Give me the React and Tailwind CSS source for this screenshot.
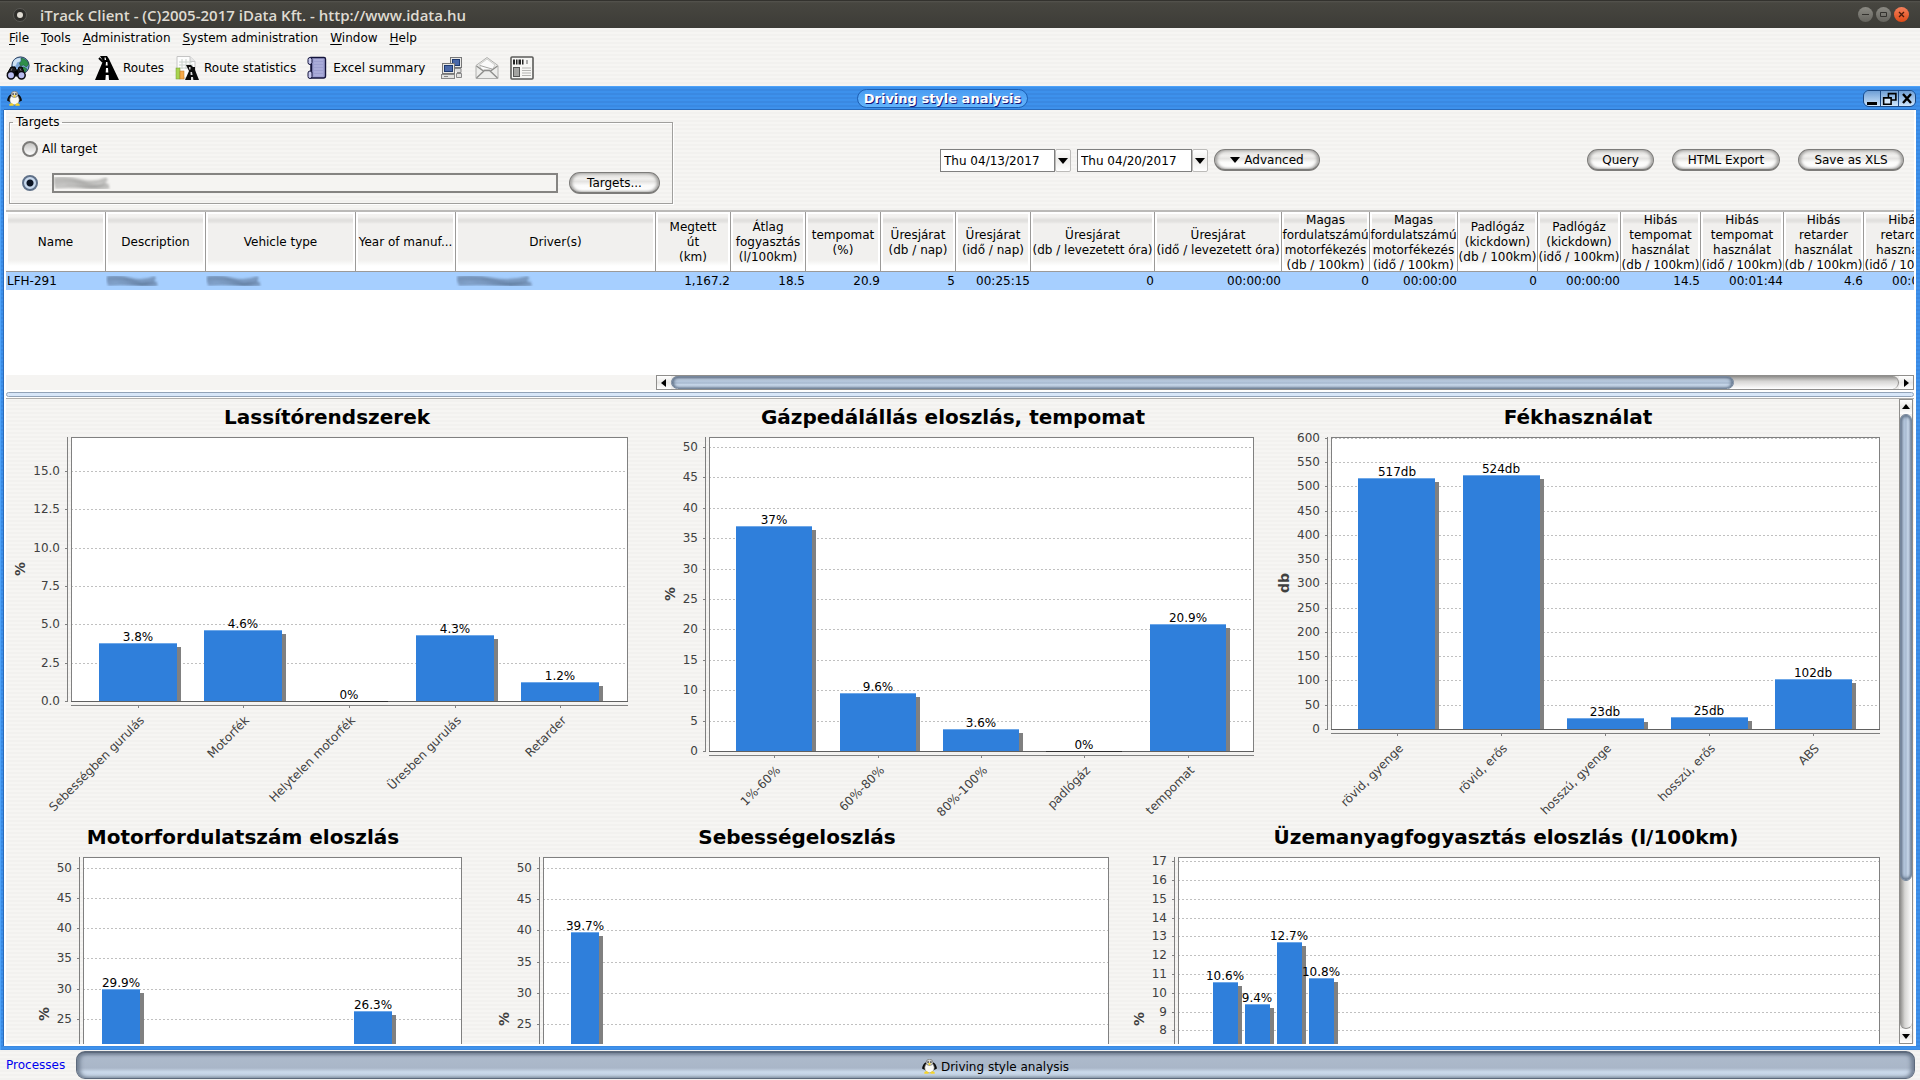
import { useLayoutEffect, useRef, useState } from "react";

const STRIPES = "bg-[repeating-linear-gradient(180deg,#f6f5f3_0px,#f6f5f3_2px,#f2f1ef_2px,#f2f1ef_4px)]";
const BLUE_STRIPES = "bg-[repeating-linear-gradient(180deg,#3d91ec_0px,#3d91ec_2px,#3a89e2_2px,#3a89e2_4px)]";
const STEEL = "bg-[linear-gradient(180deg,#8593a6_0%,#b4c3d6_20%,#b4c6dc_45%,#a3b5cb_55%,#c3d3e6_65%,#c8d8ea_100%)]";

/* ---------- icons ---------- */

function Penguin({ className }) {
  return (
    <svg className={className} viewBox="0 0 16 16" aria-hidden="true">
      <path d="M0 10 Q1 5 4 3.500 L5 8 L3.500 12Z M16 10 Q15 5 12 3.500 L11 8 L12.500 12Z" fill="#0c0c0c" />
      <ellipse cx="8" cy="9.300" rx="5" ry="5.400" fill="#fafaf6" stroke="#8a8a86" strokeWidth="0.700" />
      <ellipse cx="8" cy="3.600" rx="3.600" ry="3.300" fill="#d9d9d4" stroke="#666" strokeWidth="0.700" />
      <circle cx="6.500" cy="3.200" r="0.900" fill="#222" />
      <circle cx="9.500" cy="3.200" r="0.900" fill="#222" />
      <path d="M6.400 4.600 h3.200 l-1.600 2.600z" fill="#f4d21c" />
      <path d="M2.500 14 q2-2 4.500 0 v1.600 h-4.500z M9 14 q2-2 4.500 0 v1.600 h-4.500z" fill="#f6d428" />
    </svg>
  );
}

function TrackingIcon() {
  return (
    <svg className="h-6 w-6" viewBox="0 0 24 24" aria-hidden="true">
      <circle cx="14.500" cy="9.500" r="8.600" fill="#7fa8d8" stroke="#1d3557" />
      <path d="M9 3.500 q4-2.500 6-1 l-1 3 -3 1 -1 3 -3 1 q-1-4 2-7z" fill="#cfe3f5" />
      <path d="M15 2 q6 1 7.500 6 l-2 3 -3-2 -3 1 -1-3 2-2z M14 12 l4-1 3 2 q-1.500 3.500-4 4.500 l-2-2z" fill="#2f8f4a" stroke="#14532d" strokeWidth="0.500" />
      <path d="M5 11 h4 l1 3 h2 l1-3 h3 l3 8 -4 1 h-10 l-4-2z" fill="#1b1b1f" stroke="#000" />
      <path d="M6 12.500 l-2 5 M14 12.500 l2 4" stroke="#777" />
      <circle cx="5" cy="19.300" r="3.700" fill="#b9bdf0" stroke="#0b0b10" strokeWidth="1.500" />
      <circle cx="15.500" cy="19.300" r="3.700" fill="#b9bdf0" stroke="#0b0b10" strokeWidth="1.500" />
      <rect x="8.500" y="15" width="3.500" height="4" fill="#000" />
    </svg>
  );
}

function RoadIcon() {
  return (
    <svg className="h-6 w-6" viewBox="0 0 24 24" aria-hidden="true">
      <path d="M5 0 h7 l2 3 L24 24 H0 L8 5z" fill="#000" />
      <path d="M9.500 1.500 h1.200 l.4 2.500 h-1.400z M11 6 h1.400 l.3 3.500 h-2z M11 12 h2 l.3 4.500 h-2.600z M10.800 19 h2.800 l.4 5 h-3.600z" fill="#fff" />
      <path d="M4 2 q3 3 4 4" stroke="#000" strokeWidth="2" fill="none" />
    </svg>
  );
}

function StatsIcon() {
  return (
    <svg className="h-6 w-6" viewBox="0 0 24 24" aria-hidden="true">
      <path d="M2 .5 h13 l5 5 V22 H2z" fill="#fdfdfd" stroke="#c4c4c4" />
      <path d="M15 .5 v5 h5" fill="#e6e6e6" stroke="#c4c4c4" />
      <path d="M4 6 h13 M4 9 h14 M4 12 h14 M7 3 v10 M11 3 v10 M15 6 v7" stroke="#c9d2cc" />
      <rect x="1" y="12" width="4" height="11" fill="#a8d450" stroke="#6f9a2a" strokeWidth="0.500" />
      <rect x="5" y="15" width="4" height="8" fill="#f4a94a" stroke="#b8701c" strokeWidth="0.500" />
      <path d="M11 9 h5 l2 2 h2 v3 l4 10 H10 l4-9z" fill="#0c0c0c" />
      <path d="M14 11 h1.500 v2.500 h-1.200z M15.500 16 h1.500 l.6 3 h-2z M16 21 h2 l.4 3 h-2.400z" fill="#ddd" />
    </svg>
  );
}

function ScrollIcon() {
  return (
    <svg className="h-6 w-5" viewBox="0 0 20 24" aria-hidden="true">
      <path d="M4 1.500 h13 q1.500 0 1.500 1.500 v17 q0 2-2 2 H4z" fill="#9d9fd0" stroke="#14143c" strokeWidth="1.400" />
      <path d="M7 4 h9 M7 7 h9 M7 10 h9 M7 13 h9 M7 16 h9 M7 19 h9" stroke="#b6b8e2" />
      <rect x="1" y="1.500" width="4" height="7" rx="2" fill="#c9caee" stroke="#14143c" />
      <path d="M4.500 8 v9" stroke="#14143c" strokeWidth="1.500" />
      <rect x="1" y="15" width="4" height="7.500" rx="2" fill="#c9caee" stroke="#14143c" />
    </svg>
  );
}

function ComputersIcon() {
  return (
    <svg className="h-6 w-6" viewBox="0 0 24 24" aria-hidden="true">
      <rect x="10.500" y="1.500" width="11" height="10" fill="#e8e8e6" stroke="#777" />
      <rect x="12.500" y="3.500" width="7" height="6" fill="#4a68a8" stroke="#1e3a70" />
      <path d="M14 12.500 h7 v4 h-4" fill="#ddd" stroke="#888" />
      <rect x="2.500" y="7.500" width="12" height="10" fill="#e8e8e6" stroke="#777" />
      <rect x="4.500" y="9.500" width="8" height="6" fill="#4a68a8" stroke="#1e3a70" />
      <rect x="1.500" y="18.500" width="13" height="4" fill="#e2e2e0" stroke="#888" />
      <path d="M4 20.500 h4" stroke="#888" />
      <path d="M16.500 17.500 h5 v4 h-5z" fill="#e2e2e0" stroke="#888" />
    </svg>
  );
}

function EnvelopeIcon() {
  return (
    <svg className="h-6 w-6" viewBox="0 0 24 24" aria-hidden="true">
      <path d="M1 9.500 L12 1.500 L23 9.500 V22.500 H1z" fill="#ededeb" stroke="#b0b0ae" />
      <path d="M4 9 L12 3 L20 9 L17 14 H7z" fill="#fafafa" stroke="#cfcfcd" />
      <path d="M1.500 10 L9 15.500 M22.500 10 L15 15.500 M1.500 22 L9.500 14.500 H14.500 L22.500 22" fill="none" stroke="#8d8d8b" strokeWidth="1.300" />
      <path d="M5 9.500 L17 13" stroke="#a5a5a3" />
    </svg>
  );
}

function NewsIcon() {
  return (
    <svg className="h-6 w-6" viewBox="0 0 24 24" aria-hidden="true">
      <rect x="1" y="1" width="22" height="22" rx="1" fill="#f6f6f4" stroke="#5b5b59" strokeWidth="1.600" />
      <path d="M3 3.500 h2 v5 h-2z M6 3.500 h1.500 v5 h-1.500z M8.500 3.500 h2.500 v5 h-2.500z M12 3.500 h1.500 v5 h-1.500z" fill="#222" />
      <path d="M16 4 h2 v4 h-2z" fill="#aaa" />
      <rect x="3.500" y="11.500" width="6" height="9" fill="#a3a3a1" stroke="#555" />
      <path d="M12 12 h9 M12 14.500 h9 M12 17 h9 M12 19.500 h9" stroke="#b3b3b1" />
    </svg>
  );
}

function Smudge({ className, tone }) {
  return (
    <svg className={className} viewBox="0 0 60 14" preserveAspectRatio="none" aria-hidden="true">
      <defs>
        <filter id={"soft" + tone.slice(1)}>
          <feGaussianBlur stdDeviation="1" />
        </filter>
      </defs>
      <g filter={"url(#soft" + tone.slice(1) + ")"} stroke={tone} fill="none">
        <path d="M1 3 Q14 1 28 5 T56 3" strokeWidth="4" opacity="0.500" />
        <path d="M1 7 Q18 5 32 9 T58 10" strokeWidth="5" opacity="0.500" />
        <path d="M2 11 Q16 10 30 11 T55 7" strokeWidth="3" opacity="0.500" />
      </g>
    </svg>
  );
}

/* ---------- charts ---------- */

function useWidth() {
  const ref = useRef(null);
  const [width, setWidth] = useState(0);
  useLayoutEffect(() => {
    const el = ref.current;
    const measure = () => setWidth(el.clientWidth);
    measure();
    const observer = new ResizeObserver(measure);
    observer.observe(el);
    return () => observer.disconnect();
  }, []);
  return [ref, width];
}

function BarChart({ className, title, axis, axisX, left, right, height, unit, step, count, decimals = 0, suffix, slots, bars }) {
  const [ref, width] = useWidth();
  const top = 38;
  const bottom = top + height;
  const plot = Math.max(0, width - left - right);
  const barWidth = (plot * 0.7) / slots;
  const pitch = barWidth + (plot * 0.2) / (slots - 1);
  const ticks = Array.from({ length: count + 1 }, (_, i) => i * step);
  const yOf = (v) => Math.round(bottom - v * unit);
  const middle = Math.round(top + height / 2);
  return (
    <div ref={ref} className={className}>
      <svg className="block h-[420px] w-full font-['DejaVu_Sans',sans-serif]" role="img" aria-label={title}>
        <text x={Math.round(width / 2)} y="25" textAnchor="middle" className="fill-black text-[20px] font-bold">
          {title}
        </text>
        <text
          textAnchor="middle"
          transform={"translate(" + (axisX + 5) + " " + middle + ") rotate(-90)"}
          className="fill-[#404040] text-[14px] font-bold"
        >
          {axis}
        </text>
        <rect x={left} y={top} width={plot} height={height} fill="#fff" />
        <g shapeRendering="crispEdges">
          {ticks.map((t) => (
            <g key={t}>
              <path d={"M" + left + " " + yOf(t) + ".5 h" + plot} stroke="#c0c0c0" strokeDasharray="2 2" />
              <rect x={left - 6} y={yOf(t)} width="2" height="1" fill="#808080" />
            </g>
          ))}
        </g>
        {ticks.map((t) => (
          <text key={t} x={left - 11} y={yOf(t) + 4} textAnchor="end" className="fill-[#404040] text-[12px]">
            {t.toFixed(decimals)}
          </text>
        ))}
        {bars.map((b) => {
          const x = Math.round(left + plot * 0.05 + b.slot * pitch);
          const y = yOf(b.value);
          const w = Math.round(barWidth);
          return (
            b.value > 0 && (
              <g key={b.slot}>
                <rect x={x + 4} y={y + 4} width={w} height={Math.max(0, bottom - y - 4)} fill="#808080" />
                <rect x={x} y={y} width={w} height={bottom - y} fill="#2f7fdb" />
                <rect x={x} y={y} width={w} height="1" fill="#6fa8e8" />
              </g>
            )
          );
        })}
        <g fill="#808080">
          <rect x={left} y={top} width={plot + 1} height="1" />
          <rect x={left} y={top} width="1" height={height + 1} />
          <rect x={left + plot} y={top} width="1" height={height + 1} />
          <rect x={left} y={bottom} width={plot + 1} height="1" fill="#606060" />
          <rect x={left - 4} y={top} width="1" height={height + 1} />
          <rect x={left} y={bottom + 4} width={plot + 1} height="1" />
        </g>
        {bars.map((b) => {
          const cx = Math.round(left + plot * 0.05 + b.slot * pitch + barWidth / 2);
          return (
            <g key={b.slot}>
              <text x={cx} y={yOf(b.value) - 2} textAnchor="middle" className="fill-black text-[12px]">
                {b.label + suffix}
              </text>
              {b.name && (
                <>
                  {b.value === 0 && (
                    <rect x={Math.round(cx - barWidth / 2)} y={bottom} width={Math.round(barWidth)} height="1" fill="#303030" />
                  )}
                  <rect x={cx} y={bottom + 5} width="1" height="2" fill="#808080" />
                  <text
                    textAnchor="end"
                    transform={"translate(" + (cx + 7) + " " + (bottom + 20) + ") rotate(-45)"}
                    className="fill-[#404040] text-[12px]"
                  >
                    {b.name}
                  </text>
                </>
              )}
            </g>
          );
        })}
      </svg>
    </div>
  );
}

/* ---------- controls ---------- */

function PillButton({ children, className = "" }) {
  return (
    <button
      type="button"
      className={
        "flex h-[22px] items-center justify-center gap-1 whitespace-nowrap rounded-full border border-b-2 border-[#7d7c7a] bg-[linear-gradient(180deg,#d6d5d3_0%,#f1f0ee_30%,#e4e3e1_45%,#fbfbfa_65%,#ffffff_100%)] px-[15px] text-[12px] leading-[18px] shadow-[inset_2px_0_3px_#a5a4a2,inset_-2px_0_3px_#a5a4a2] " +
        className
      }
    >
      {children}
    </button>
  );
}

function DateField({ label, value }) {
  return (
    <div className="flex h-[23px]">
      <input
        type="text"
        aria-label={label}
        defaultValue={value}
        className="w-[115px] border border-[#7f7f7f] bg-white px-[3px] text-[12px] outline-none"
      />
      <button
        type="button"
        aria-label={"Open " + label + " calendar"}
        className="flex w-4 items-center justify-center rounded-[2px] border border-[#bcbbb9] bg-[linear-gradient(180deg,#fff,#eeedeb_50%,#fff)]"
      >
        <svg className="h-[6px] w-[10px]" viewBox="0 0 10 6" aria-hidden="true">
          <path d="M0 0h10L5 6z" />
        </svg>
      </button>
    </div>
  );
}

function ArrowButton({ label, d, className }) {
  return (
    <button
      type="button"
      aria-label={label}
      className={"flex shrink-0 items-center justify-center bg-[linear-gradient(180deg,#fff,#e9e8e6_50%,#fff)] " + className}
    >
      <svg className="h-2 w-2" viewBox="0 0 8 8" aria-hidden="true">
        <path d={d} />
      </svg>
    </button>
  );
}

function MenuItem({ text }) {
  return (
    <button type="button" className="whitespace-nowrap text-[12px] leading-5">
      <span className="underline underline-offset-2">{text[0]}</span>
      {text.slice(1)}
    </button>
  );
}

function HeaderCell({ lines }) {
  return (
    <th scope="col" className="h-[60px] overflow-visible border-b border-r border-[#9b9a98] bg-white p-0 font-normal">
      <div className="flex h-[59px] items-center justify-center border-x-2 border-t-2 border-white bg-[linear-gradient(180deg,#f4f3f1_0px,#f2f1ef_3px,#e0dfdd_6px,#e4e3e1_8px,#f1f0ee_10px,#f1f0ee_46px,#ffffff_52px)] text-center text-[12px] leading-[15px] whitespace-nowrap">
        <div>
          {lines.map((l, i) => (
            <div key={i} className="flex justify-center">{l}</div>
          ))}
        </div>
      </div>
    </th>
  );
}

const METRICS = [
  { w: 75, head: ["Megtett", "út", "(km)"], value: "1,167.2" },
  { w: 75, head: ["Átlag", "fogyasztás", "(l/100km)"], value: "18.5" },
  { w: 75, head: ["tempomat", "(%)"], value: "20.9" },
  { w: 75, head: ["Üresjárat", "(db / nap)"], value: "5" },
  { w: 75, head: ["Üresjárat", "(idő / nap)"], value: "00:25:15" },
  { w: 124, head: ["Üresjárat", "(db / levezetett óra)"], value: "0" },
  { w: 127, head: ["Üresjárat", "(idő / levezetett óra)"], value: "00:00:00" },
  { w: 88, head: ["Magas", "fordulatszámú", "motorfékezés", "(db / 100km)"], value: "0" },
  { w: 88, head: ["Magas", "fordulatszámú", "motorfékezés", "(idő / 100km)"], value: "00:00:00" },
  { w: 80, head: ["Padlógáz", "(kickdown)", "(db / 100km)"], value: "0" },
  { w: 83, head: ["Padlógáz", "(kickdown)", "(idő / 100km)"], value: "00:00:00" },
  { w: 80, head: ["Hibás", "tempomat", "használat", "(db / 100km)"], value: "14.5" },
  { w: 83, head: ["Hibás", "tempomat", "használat", "(idő / 100km)"], value: "00:01:44" },
  { w: 80, head: ["Hibás", "retarder", "használat", "(db / 100km)"], value: "4.6" },
  { w: 83, head: ["Hibás", "retarder", "használat", "(idő / 100km)"], value: "00:00:22" },
];

const FIXED = [
  { w: 100, head: "Name" },
  { w: 100, head: "Description" },
  { w: 150, head: "Vehicle type" },
  { w: 100, head: "Year of manuf..." },
  { w: 200, head: "Driver(s)" },
];

function ResultTables() {
  return (
    <div className="flex border-t-2 border-[#bbbab8] bg-white">
      <div className="flex w-[650px] shrink-0 flex-col">
        <table className="w-[650px] table-fixed border-separate border-spacing-0 text-[12px]">
          <colgroup>
            {FIXED.map((c) => (
              <col key={c.head} style={{ width: c.w }} />
            ))}
          </colgroup>
          <thead>
            <tr>
              {FIXED.map((c) => (
                <HeaderCell key={c.head} lines={[c.head]} />
              ))}
            </tr>
          </thead>
          <tbody>
            <tr className="h-[18px] bg-[#a6cfff] leading-[18px]">
              <td className="p-0 pl-px">LFH-291</td>
              <td className="p-0"><Smudge className="h-[12px] w-[53px]" tone="#4d6482" /></td>
              <td className="p-0"><Smudge className="h-[12px] w-[56px]" tone="#4d6482" /></td>
              <td className="p-0" />
              <td className="p-0"><Smudge className="h-[12px] w-[78px]" tone="#4d6482" /></td>
            </tr>
          </tbody>
        </table>
        <div className="h-[85px]" />
        <div className="h-[15px] bg-[#f5f4f2]" />
      </div>
      <div className="flex min-w-0 flex-1 flex-col">
        <div className="overflow-hidden">
          <table className="w-[1291px] table-fixed border-separate border-spacing-0 text-[12px]">
            <colgroup>
              {METRICS.map((c, i) => (
                <col key={i} style={{ width: c.w }} />
              ))}
            </colgroup>
            <thead>
              <tr>
                {METRICS.map((c, i) => (
                  <HeaderCell key={i} lines={c.head} />
                ))}
              </tr>
            </thead>
            <tbody>
              <tr className="h-[18px] bg-[#a6cfff] text-right leading-[18px]">
                {METRICS.map((c, i) => (
                  <td key={i} className="p-0 pr-px">{c.value}</td>
                ))}
              </tr>
            </tbody>
          </table>
        </div>
        <div className="h-[85px]" />
        <div className="flex h-[15px] border border-[#8f8e8c] bg-[#f0efed]">
          <ArrowButton label="Scroll left" d="M6 0v8L1 4z" className="w-[14px]" />
          <div className="flex min-w-0 flex-1 rounded-full border-r border-[#8f8e8c] bg-[linear-gradient(180deg,#8b8a88,#d6d5d3_40%,#fff)]">
            <div className={"flex-[866] rounded-full border border-[#76879c] shadow-[inset_2px_0_3px_#64768c,inset_-2px_0_3px_#64768c] " + STEEL} />
            <div className="flex-[134]" />
          </div>
          <ArrowButton label="Scroll right" d="M2 0v8l5-4z" className="w-[14px]" />
        </div>
      </div>
    </div>
  );
}

function Form() {
  return (
    <div className="flex h-[100px] items-start justify-between pr-[10px] pl-[3px]">
      <fieldset className="mt-[3px] h-[91px] w-[664px] border border-[#a09f9d] px-3 shadow-[inset_1px_1px_0_#fff,1px_1px_0_#fff]">
        <legend className="-ml-[9px] px-[3px] text-[12px] leading-[18px]">Targets</legend>
        <div className="mt-[10px] flex h-4 items-center">
          <input
            id="all-target"
            type="radio"
            name="scope"
            className="h-4 w-4 appearance-none rounded-full border-2 border-[#7c7b79] bg-[linear-gradient(180deg,#c4c3c1,#fff)]"
          />
          <label htmlFor="all-target" className="ml-1 text-[12px]">All target</label>
        </div>
        <div className="mt-[15px] flex h-[22px] items-center">
          <input
            type="radio"
            name="scope"
            defaultChecked
            aria-label="Selected targets"
            className="h-4 w-4 appearance-none rounded-full border-2 border-[#5f7088] bg-[radial-gradient(circle,#0c1422_0_3px,#c7d8ec_4px)]"
          />
          <div className="relative ml-[14px] h-[20px] flex-1">
            <input type="text" readOnly aria-label="Targets" className="h-full w-full border-2 border-[#858482] bg-[#f5f4f2]" />
            <Smudge className="absolute top-[3px] left-[1px] h-[14px] w-[58px]" tone="#8a8a88" />
          </div>
          <PillButton className="ml-[11px] w-[91px]">Targets...</PillButton>
        </div>
      </fieldset>
      <div className="mt-[39px] flex gap-[6px]">
        <DateField label="start date" value="Thu 04/13/2017" />
        <DateField label="end date" value="Thu 04/20/2017" />
        <PillButton className="w-[106px]">
          <svg className="h-[6px] w-[10px]" viewBox="0 0 10 6" aria-hidden="true">
            <path d="M0 0h10L5 6z" />
          </svg>
          Advanced
        </PillButton>
      </div>
      <div className="mt-[39px] flex gap-[18px]">
        <PillButton className="w-[67px]">Query</PillButton>
        <PillButton className="w-[108px]">HTML Export</PillButton>
        <PillButton className="w-[106px]">Save as XLS</PillButton>
      </div>
    </div>
  );
}

function Charts() {
  return (
    <div className="flex min-h-0 flex-1">
      <div className="min-w-0 flex-1 overflow-hidden">
        <div className="flex">
          <BarChart
            className="min-w-0 flex-[642]" title="Lassítórendszerek" axis="%" axisX={14} left={65} right={21}
            height={264} unit={15.33} step={2.5} count={6} decimals={1} suffix="%" slots={5}
            bars={[
              { slot: 0, value: 3.8, label: "3.8", name: "Sebességben gurulás" },
              { slot: 1, value: 4.6, label: "4.6", name: "Motorfék" },
              { slot: 2, value: 0, label: "0", name: "Helytelen motorfék" },
              { slot: 3, value: 4.3, label: "4.3", name: "Üresben gurulás" },
              { slot: 4, value: 1.25, label: "1.2", name: "Retarder" },
            ]}
          />
          <BarChart
            className="min-w-0 flex-[610]" title="Gázpedálállás eloszlás, tempomat" axis="%" axisX={22} left={61} right={5}
            height={314} unit={6.08} step={5} count={10} suffix="%" slots={5}
            bars={[
              { slot: 0, value: 37, label: "37", name: "1%-60%" },
              { slot: 1, value: 9.6, label: "9.6", name: "60%-80%" },
              { slot: 2, value: 3.6, label: "3.6", name: "80%-100%" },
              { slot: 3, value: 0, label: "0", name: "padlógáz" },
              { slot: 4, value: 20.9, label: "20.9", name: "tempomat" },
            ]}
          />
          <BarChart
            className="min-w-0 flex-[640]" title="Fékhasználat" axis="db" axisX={26} left={73} right={19}
            height={292} unit={0.4853} step={50} count={12} suffix="db" slots={5}
            bars={[
              { slot: 0, value: 517, label: "517", name: "rövid, gyenge" },
              { slot: 1, value: 524, label: "524", name: "rövid, erős" },
              { slot: 2, value: 23, label: "23", name: "hosszú, gyenge" },
              { slot: 3, value: 25, label: "25", name: "hosszú, erős" },
              { slot: 4, value: 102, label: "102", name: "ABS" },
            ]}
          />
        </div>
        <div className="flex">
          <BarChart
            className="min-w-0 flex-[474]" title="Motorfordulatszám eloszlás" axis="%" axisX={38} left={77} right={19}
            height={313} unit={6.05} step={5} count={10} suffix="%" slots={7}
            bars={[
              { slot: 0, value: 29.9, label: "29.9" },
              { slot: 5, value: 26.3, label: "26.3" },
            ]}
          />
          <BarChart
            className="min-w-0 flex-[633]" title="Sebességeloszlás" axis="%" axisX={24} left={63} right={5}
            height={323} unit={6.24} step={5} count={10} suffix="%" slots={14}
            bars={[{ slot: 0, value: 39.7, label: "39.7" }]}
          />
          <BarChart
            className="min-w-0 flex-[785]" title="Üzemanyagfogyasztás eloszlás (l/100km)" axis="%" axisX={26} left={65} right={19}
            height={324} unit={18.82} step={1} count={17} suffix="%" slots={20}
            bars={[
              { slot: 0, value: 10.6, label: "10.6" },
              { slot: 1, value: 9.4, label: "9.4" },
              { slot: 2, value: 12.7, label: "12.7" },
              { slot: 3, value: 10.8, label: "10.8" },
            ]}
          />
        </div>
      </div>
      <div className="mx-px flex w-[14px] shrink-0 flex-col border border-[#8f8e8c] bg-[#f0efed]">
        <ArrowButton label="Scroll up" d="M0 6h8L4 1z" className="h-[14px]" />
        <div className="min-h-0 flex-1 rounded-full border-b border-[#8f8e8c] bg-[linear-gradient(90deg,#8b8a88,#d6d5d3_40%,#fff)]">
          <div className="h-[76%] w-full rounded-full border border-[#76879c] bg-[linear-gradient(90deg,#8e9cae_0%,#b4c6dc_30%,#a9bbd1_50%,#c8d8ea_70%,#b4c3d6_100%)] shadow-[inset_0_2px_3px_#64768c,inset_0_-2px_3px_#64768c]" />
        </div>
        <ArrowButton label="Scroll down" d="M0 2h8L4 7z" className="h-[14px]" />
      </div>
    </div>
  );
}

export default function App() {
  return (
    <div className={"flex h-screen min-w-0 flex-col overflow-hidden font-['DejaVu_Sans',sans-serif] text-[12px] text-black " + STRIPES}>
      <header className="flex h-7 shrink-0 items-center border-t border-[#33322e] bg-[linear-gradient(180deg,#55544f_0px,#474640_2px,#3d3c37_100%)] pr-[11px] pl-[13px]">
        <svg className="h-[14px] w-[14px]" viewBox="0 0 14 14" aria-hidden="true">
          <circle cx="7" cy="7" r="6.500" fill="#2f2e2b" stroke="#5a5954" />
          <circle cx="7" cy="7" r="3" fill="#dfdbd2" />
        </svg>
        <h1 className="ml-[13px] flex-1 font-['Open_Sans',sans-serif] text-[15px] leading-5 font-semibold text-[#dfdbd2]">
          iTrack Client - (C)2005-2017 iData Kft. - http://www.idata.hu
        </h1>
        <div className="flex gap-[3px]">
          <button type="button" aria-label="Minimize" className="h-[15px] w-[15px] rounded-full bg-[linear-gradient(180deg,#8b8a83,#65645e)]">
            <svg viewBox="0 0 15 15" aria-hidden="true"><path d="M4 7h7v1H4z" fill="#33322e" /></svg>
          </button>
          <button type="button" aria-label="Maximize" className="h-[15px] w-[15px] rounded-full bg-[linear-gradient(180deg,#8b8a83,#65645e)]">
            <svg viewBox="0 0 15 15" aria-hidden="true"><path d="M4.500 5.500h6v4h-6z" fill="none" stroke="#33322e" /></svg>
          </button>
          <button type="button" aria-label="Close" className="h-[15px] w-[15px] rounded-full bg-[linear-gradient(180deg,#f4805c,#df4a16)]">
            <svg viewBox="0 0 15 15" aria-hidden="true"><path d="M5 5l5 5M10 5l-5 5" stroke="#4a1c0c" strokeWidth="1.300" /></svg>
          </button>
        </div>
      </header>

      <nav className="flex h-5 shrink-0 items-center gap-3 pl-[9px]" aria-label="Main menu">
        {["File", "Tools", "Administration", "System administration", "Window", "Help"].map((m) => (
          <MenuItem key={m} text={m} />
        ))}
      </nav>

      <div className="flex h-[38px] shrink-0 items-center gap-[11px] pt-[2px] pl-[6px]">
        <button type="button" className="flex items-center gap-1 whitespace-nowrap"><TrackingIcon />Tracking</button>
        <button type="button" className="flex items-center gap-1 whitespace-nowrap"><RoadIcon />Routes</button>
        <button type="button" className="flex items-center gap-[5px] whitespace-nowrap"><StatsIcon />Route statistics</button>
        <button type="button" className="flex items-center gap-[6px] whitespace-nowrap"><ScrollIcon />Excel summary</button>
        <button type="button" aria-label="Computers" className="ml-1"><ComputersIcon /></button>
        <button type="button" aria-label="Messages"><EnvelopeIcon /></button>
        <button type="button" aria-label="News"><NewsIcon /></button>
      </div>

      <main className={"flex min-h-0 flex-1 flex-col border-t border-l border-[#4ea2f8] pr-1 pb-1 pl-[3px] " + BLUE_STRIPES}>
        <div className="flex h-[23px] shrink-0 items-center">
          <Penguin className="ml-[3px] h-[15px] w-[15px]" />
          <div className="flex flex-1 justify-center pb-px">
            <h2 className="rounded-full border border-[#1c5fb4] bg-[linear-gradient(180deg,#4a9cf2,#63b4fb)] px-[6px] text-[13px] leading-[17px] font-bold text-white [text-shadow:1px_1px_0_#15157a]">
              Driving style analysis
            </h2>
          </div>
          <div className="flex h-[17px] overflow-hidden rounded-[6px] border border-[#1c4a86]">
            <button type="button" aria-label="Minimize window" className="w-[17px] border-r border-[#1c4a86] bg-[linear-gradient(180deg,#6f9fd6,#cfe6fb)]">
              <svg viewBox="0 0 16 15" aria-hidden="true"><path d="M3 11h10v3H3z" /></svg>
            </button>
            <button type="button" aria-label="Restore window" className="w-[18px] border-r border-[#1c4a86] bg-[linear-gradient(180deg,#6f9fd6,#cfe6fb)]">
              <svg viewBox="0 0 16 15" aria-hidden="true">
                <path d="M7 2.500h7v6H7z" fill="none" stroke="#000" strokeWidth="1.500" />
                <path d="M2.500 6.500h7v6h-7z" fill="#d6e8fa" stroke="#000" strokeWidth="1.500" />
              </svg>
            </button>
            <button type="button" aria-label="Close window" className="w-4 bg-[linear-gradient(180deg,#6f9fd6,#cfe6fb)]">
              <svg viewBox="0 0 16 15" aria-hidden="true"><path d="M4 3l8 9M12 3l-8 9" stroke="#000" strokeWidth="2.400" /></svg>
            </button>
          </div>
        </div>
        <div className={"flex min-h-0 flex-1 flex-col border-x-2 border-b-2 border-white shadow-[0_-1px_0_#2a6cbc,-1px_0_0_#2a6cbc] " + STRIPES}>
          <Form />
          <ResultTables />
          <div className="shrink-0 border-b border-[#b0afad] bg-white pt-[2px] pb-px">
            <div className="h-[5px] rounded-full border border-[#92a3b8] bg-[#d8e7f9]" />
          </div>
          <Charts />
        </div>
      </main>

      <footer className="flex h-[30px] shrink-0 pt-px pr-[5px] pb-px pl-[6px]">
        <a href="#processes" className="flex w-[70px] items-center text-[#0000f0]">Processes</a>
        <button
          type="button"
          className="flex flex-1 items-center justify-center gap-1 rounded-[9px] border border-t-2 border-[#5d6a7c] bg-[linear-gradient(180deg,#8f9db0_0%,#adbacb_15%,#a9b6c8_60%,#c9d8e9_75%,#cfdeee_100%)] pt-[2px] shadow-[inset_3px_0_4px_#6f7d90,inset_-3px_0_4px_#6f7d90]"
        >
          <Penguin className="h-[15px] w-[15px]" />
          Driving style analysis
        </button>
      </footer>
    </div>
  );
}
